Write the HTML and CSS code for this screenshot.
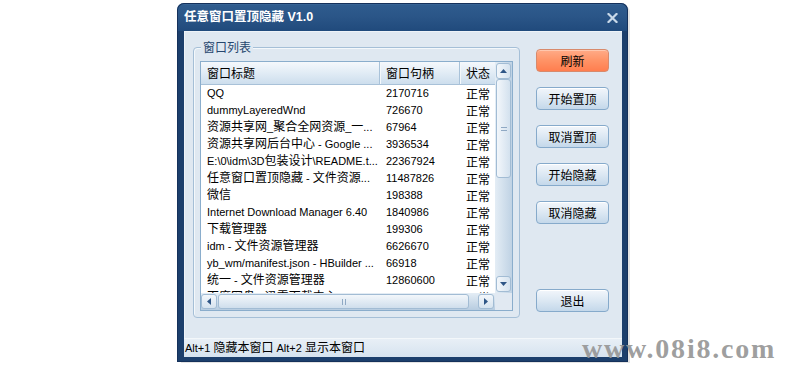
FILE: index.html
```html
<!DOCTYPE html>
<html lang="zh-CN">
<head>
<meta charset="utf-8">
<title>任意窗口置顶隐藏 V1.0</title>
<link rel="stylesheet" href="styles.css">
</head>
<body>
<div class="stage">
  <div class="win">
    <div class="titlebar">
      <span class="title">任意窗口置顶隐藏 V1.0</span>
      <svg class="close" width="11" height="10" viewBox="0 0 11 10"><path d="M1.5 1 L9.5 9 M9.5 1 L1.5 9" stroke="#c9d9e9" stroke-width="2.2" stroke-linecap="square" fill="none"/></svg>
    </div>
    <div class="client">
      <div class="main">
        <div class="group">
          <span class="glabel">窗口列表</span>
          <div class="lv">
            <div class="lvmain">
              <div class="hdr">
                <div class="hc c1">窗口标题</div>
                <div class="hc c2">窗口句柄</div>
                <div class="hc c3">状态</div>
              </div>
              <div class="rows">
                <div class="row"><span class="c1">QQ</span><span class="c2">2170716</span><span class="c3">正常</span></div>
                <div class="row"><span class="c1">dummyLayeredWnd</span><span class="c2">726670</span><span class="c3">正常</span></div>
                <div class="row"><span class="c1"><span class="z">资源共享网</span>_<span class="z">聚合全网资源</span>_<span class="z">一</span>...</span><span class="c2">67964</span><span class="c3">正常</span></div>
                <div class="row"><span class="c1"><span class="z">资源共享网后台中心</span> - Google ...</span><span class="c2">3936534</span><span class="c3">正常</span></div>
                <div class="row"><span class="c1">E:\0\idm\3D<span class="z">包装设计</span>\README.t...</span><span class="c2">22367924</span><span class="c3">正常</span></div>
                <div class="row"><span class="c1"><span class="z">任意窗口置顶隐藏</span> - <span class="z">文件资源</span>...</span><span class="c2">11487826</span><span class="c3">正常</span></div>
                <div class="row"><span class="c1"><span class="z">微信</span></span><span class="c2">198388</span><span class="c3">正常</span></div>
                <div class="row"><span class="c1">Internet Download Manager 6.40</span><span class="c2">1840986</span><span class="c3">正常</span></div>
                <div class="row"><span class="c1"><span class="z">下载管理器</span></span><span class="c2">199306</span><span class="c3">正常</span></div>
                <div class="row"><span class="c1">idm - <span class="z">文件资源管理器</span></span><span class="c2">6626670</span><span class="c3">正常</span></div>
                <div class="row"><span class="c1">yb_wm/manifest.json - HBuilder ...</span><span class="c2">66918</span><span class="c3">正常</span></div>
                <div class="row"><span class="c1"><span class="z">统一</span> - <span class="z">文件资源管理器</span></span><span class="c2">12860600</span><span class="c3">正常</span></div>
                <div class="row"><span class="c1"><span class="z">百度网盘</span> - <span class="z">迅雷下载中心</span></span><span class="c2">1310722</span><span class="c3">正常</span></div>
              </div>
            </div>
            <div class="vscroll">
              <div class="sbtn vbtn"><svg width="7" height="4" viewBox="0 0 7 4"><path d="M0 4 L3.5 0 L7 4 Z" fill="#2f5686"/></svg></div>
              <div class="vthumb"><svg width="6" height="4" viewBox="0 0 6 4"><path d="M0 0.5 H6 M0 3.5 H6" stroke="#8fa9c4" stroke-width="1"/></svg></div>
              <div class="vtrack"></div>
              <div class="sbtn vbtn"><svg width="7" height="4" viewBox="0 0 7 4"><path d="M0 0 L3.5 4 L7 0 Z" fill="#2f5686"/></svg></div>
            </div>
            <div class="hscroll">
              <div class="sbtn hbtn"><svg width="4" height="7" viewBox="0 0 4 7"><path d="M4 0 L0 3.5 L4 7 Z" fill="#2f5686"/></svg></div>
              <div class="hthumb"><svg width="4" height="6" viewBox="0 0 4 6"><path d="M0.5 0 V6 M3.5 0 V6" stroke="#8fa9c4" stroke-width="1"/></svg></div>
              <div class="htrack"></div>
              <div class="sbtn hbtn"><svg width="4" height="7" viewBox="0 0 4 7"><path d="M0 0 L4 3.5 L0 7 Z" fill="#2f5686"/></svg></div>
            </div>
            <div class="corner"></div>
          </div>
        </div>
        <div class="btns">
          <div class="btn hot">刷新</div>
          <div class="btn">开始置顶</div>
          <div class="btn">取消置顶</div>
          <div class="btn">开始隐藏</div>
          <div class="btn">取消隐藏</div>
          <div class="btn exit">退出</div>
        </div>
      </div>
      <div class="status">Alt+1 <span class="z">隐藏本窗口</span> Alt+2 <span class="z">显示本窗口</span></div>
    </div>
  </div>
  <div class="wm">www.08i8.com</div>
</div>
</body>
</html>
```

FILE: styles.css
```css
* { box-sizing: border-box; }
html, body { margin: 0; padding: 0; background: #ffffff; }
body { width: 800px; height: 369px; overflow: hidden; font-family: "Liberation Sans", "Noto Sans CJK SC", sans-serif; }

.stage { position: relative; width: 800px; height: 369px; padding: 3px 0 0 177px; }

.win {
  width: 451px;
  height: 359px;
  padding: 0 6px 5px 7px;
  border-radius: 7px 7px 0 0;
  background: linear-gradient(to bottom, #4c79aa 0px, #2f5c8e 2px, #2a5587 14px, #204a7c 28px, #1c3f6c 28px);
  box-shadow: inset 0 0 0 1px #15315b, 3px 2px 0 -1px #e4e4e4;
  display: flex;
  flex-direction: column;
}

.titlebar { height: 28px; display: flex; align-items: center; }
.title { color: #ffffff; font: bold 12.5px "Liberation Sans", "Noto Sans CJK SC", sans-serif; line-height: 14px; }
.close { margin-left: auto; margin-right: 4px; margin-top: 1px; }

.client {
  flex: 1;
  background: #dfe8f1;
  display: flex;
  flex-direction: column;
  box-shadow: inset 1px 1px 0 #eef3f8;
}
.main { height: 307px; display: flex; align-items: flex-start; padding-left: 9px; }

.group {
  position: relative;
  margin-top: 16px;
  width: 327px;
  height: 271px;
  border: 1px solid #a5bfd7;
  border-radius: 4px;
  box-shadow: inset 1px 1px 0 #f4f8fb;
  padding: 13px 6px 6px 6px;
}
.glabel {
  position: absolute;
  left: 7px;
  top: -8px;
  padding: 0 2px;
  background: #dfe8f1;
  color: #26466e;
  font: 12px "Noto Sans CJK SC", sans-serif;
  line-height: 14px;
}

.lv {
  width: 313px;
  height: 250px;
  border: 1px solid #8aadcc;
  background: #ffffff;
  display: grid;
  grid-template-columns: 294px 17px;
  grid-template-rows: 231px 17px;
}
.lvmain { overflow: hidden; }

.hdr {
  height: 23px;
  display: flex;
  background: linear-gradient(to bottom, #f5f8fc 0%, #e3edf6 45%, #cddeed 100%);
  border-bottom: 1px solid #a8c1d8;
  font: 12px "Noto Sans CJK SC", sans-serif;
  line-height: 22px;
}
.hc { padding-left: 6px; white-space: nowrap; flex-shrink: 0; }
.hc.c1, .hc.c2 { border-right: 1px solid #a9c2d9; box-shadow: 1px 0 0 #f4f8fb; }
.c1 { width: 179px; flex-shrink: 0; }
.c2 { width: 80px; flex-shrink: 0; }
.c3 { flex: 1; }

.rows { font-size: 11px; color: #000000; }
.row { height: 17px; display: flex; line-height: 17px; white-space: nowrap; }
.row > span { padding-left: 6px; white-space: nowrap; }
.row .c3 { font: 12px "Noto Sans CJK SC", sans-serif; line-height: 17px; }
.z { font: 12px "Noto Sans CJK SC", sans-serif; line-height: 10px; }

.vscroll {
  display: flex;
  flex-direction: column;
  padding: 1px;
  background: linear-gradient(to right, #e4edf5, #bfd2e4);
}
.sbtn {
  border: 1px solid #a2bcd4;
  border-radius: 3px;
  display: flex;
  align-items: center;
  justify-content: center;
}
.vbtn { height: 16px; flex-shrink: 0; background: linear-gradient(to right, #f3f7fb, #d6e3ef); }
.vthumb {
  height: 99px;
  flex-shrink: 0;
  border: 1px solid #a2bcd4;
  border-radius: 3px;
  background: linear-gradient(to right, #f3f7fb, #d3e1ee);
  display: flex;
  align-items: center;
  justify-content: center;
}
.vtrack { flex: 1; }

.hscroll {
  display: flex;
  padding: 1px 1px 1px 0;
  background: linear-gradient(to bottom, #e4edf5, #b7cce0);
}
.hbtn { width: 16px; flex-shrink: 0; background: linear-gradient(to bottom, #f3f7fb, #d6e3ef); }
.hthumb {
  width: 251px;
  flex-shrink: 0;
  margin-left: 1px;
  border: 1px solid #a2bcd4;
  border-radius: 3px;
  background: linear-gradient(to bottom, #f3f7fb, #cfdeec);
  display: flex;
  align-items: center;
  justify-content: center;
}
.htrack { flex: 1; }
.corner { background: #e1e9f2; }

.btns {
  margin-top: 18px;
  margin-left: 16px;
  width: 73px;
  height: 263px;
  display: flex;
  flex-direction: column;
  gap: 15px;
}
.btn {
  height: 23px;
  flex-shrink: 0;
  border: 1px solid #86aacb;
  border-radius: 4px;
  background: linear-gradient(to bottom, #f2f6fb 0%, #dce8f3 50%, #c4d8ea 100%);
  box-shadow: inset 0 1px 0 #ffffff;
  color: #000000;
  font: 12px "Noto Sans CJK SC", sans-serif;
  line-height: 21px;
  text-align: center;
}
.btn.hot {
  border-color: #d88a6c;
  background: linear-gradient(to bottom, #ffab88 0%, #ff9366 50%, #ff7e4f 100%);
  box-shadow: inset 0 1px 0 #ffc7ae;
}
.btn.exit { margin-top: auto; }

.status {
  height: 19px;
  border-top: 1px solid #f3f7fa;
  background: linear-gradient(to bottom, #e8eff6, #d6e3ef);
  padding-left: 1px;
  font-size: 11px;
  line-height: 18px;
  color: #000000;
  white-space: nowrap;
}

.wm {
  position: absolute;
  left: 582px;
  top: 335px;
  font: bold 28px "Liberation Serif", serif;
  line-height: 28px;
  letter-spacing: 1.8px;
  color: rgba(150, 150, 150, 0.92);
  white-space: nowrap;
}
```
